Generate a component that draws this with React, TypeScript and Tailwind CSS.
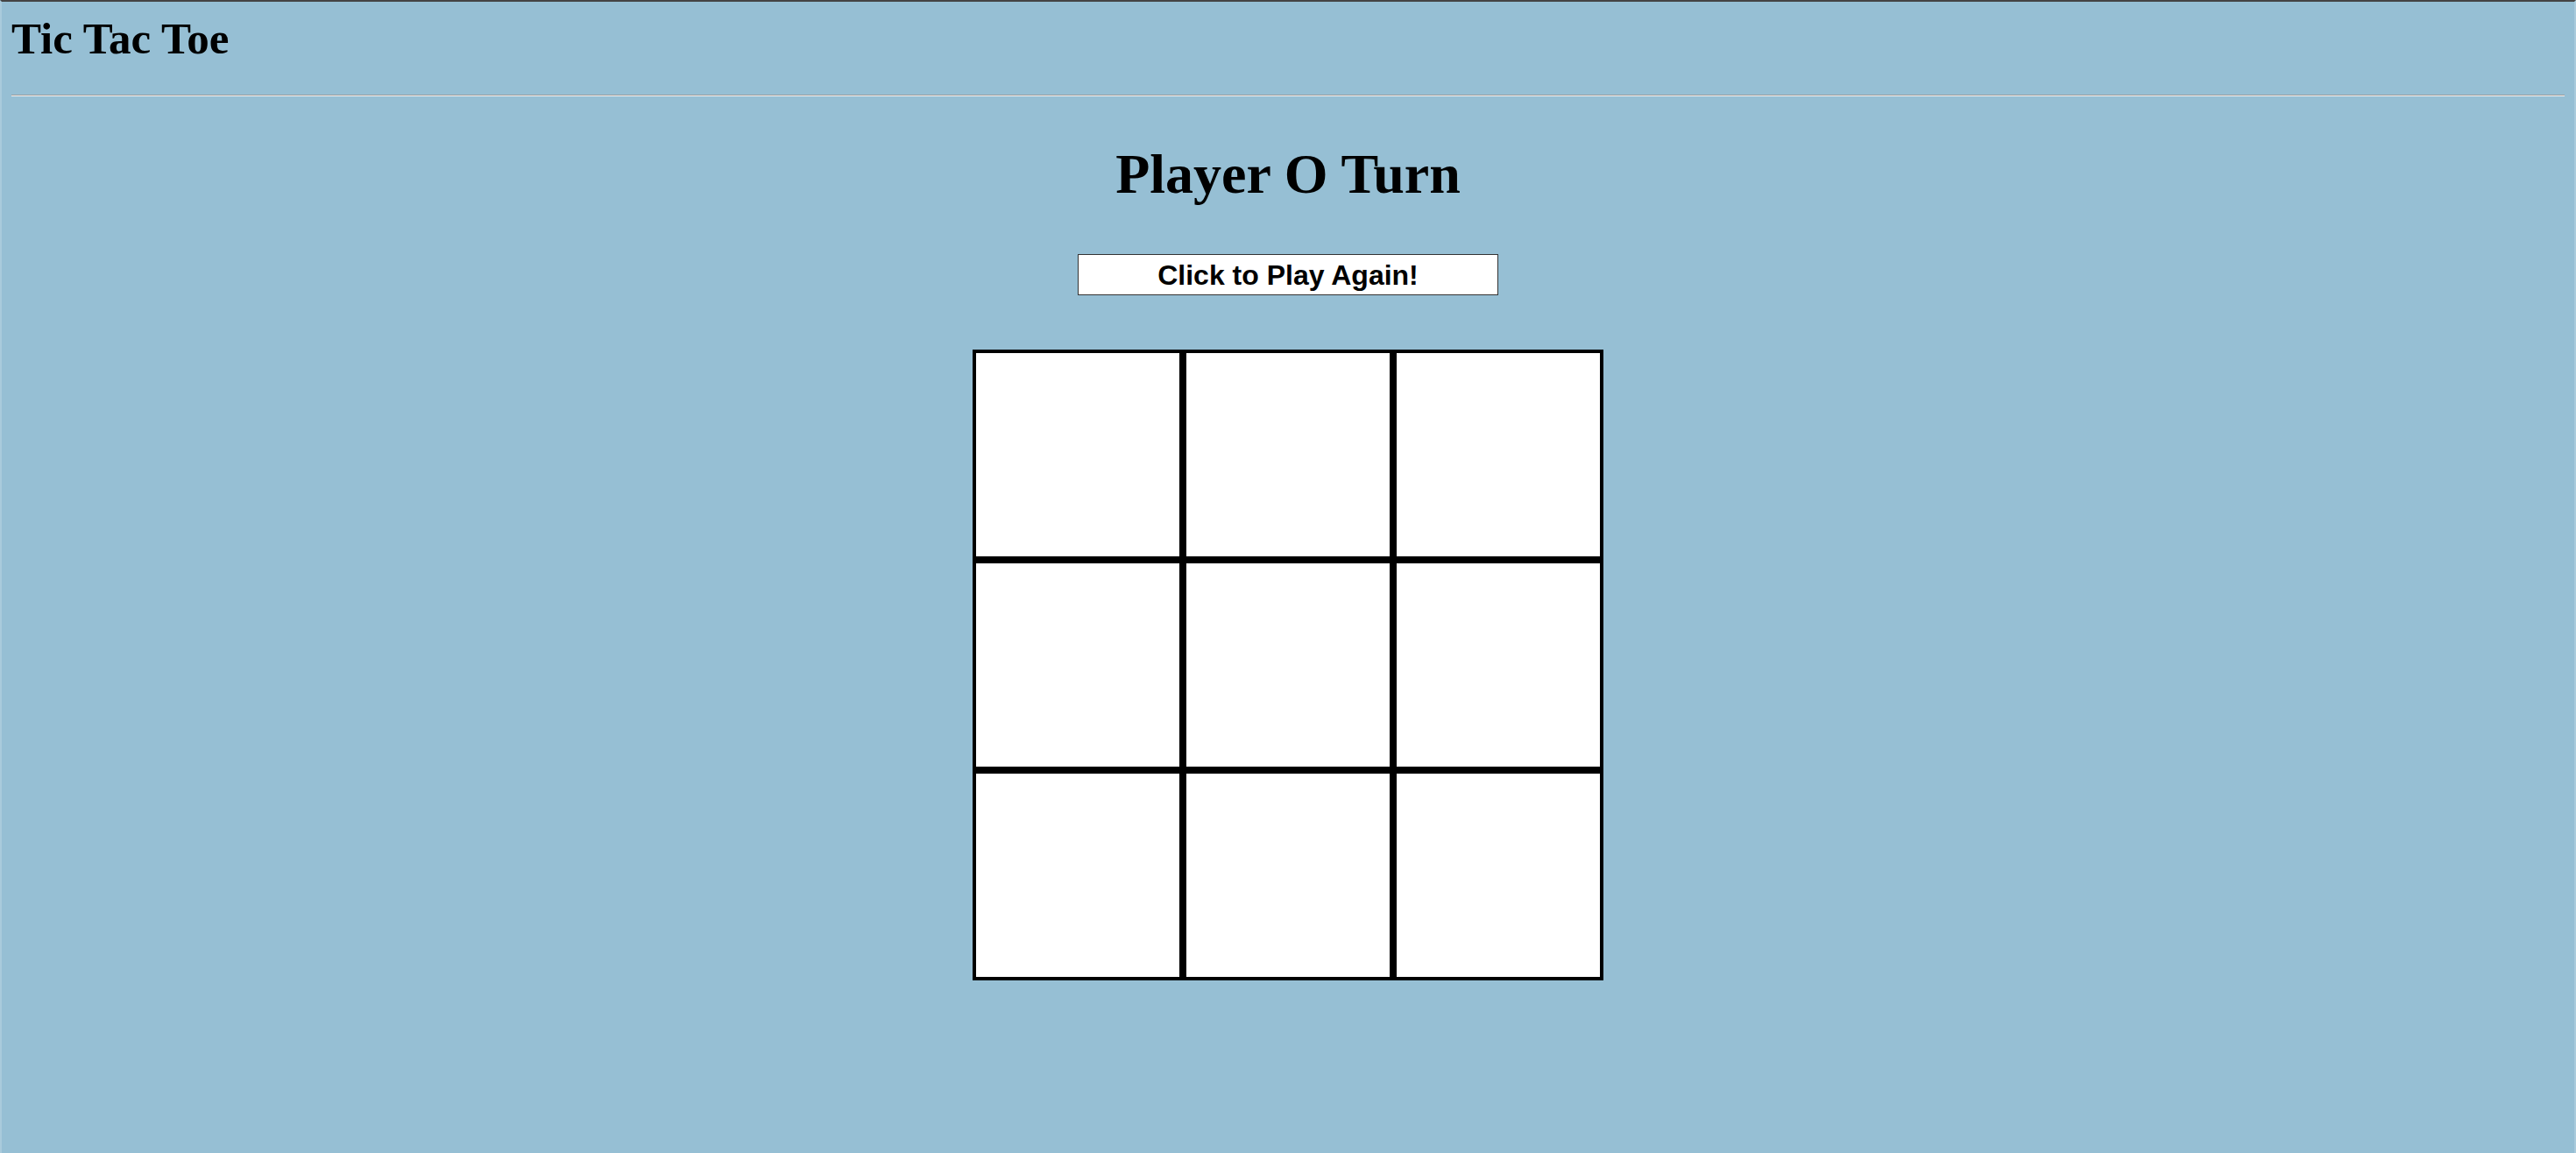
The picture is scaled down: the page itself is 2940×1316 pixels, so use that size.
import React from "react";

export default function App() {
  const cells = Array.from({ length: 9 });
  return (
    <div className="min-h-[1316px] w-full bg-[#96bfd4] border-t-2 border-t-[#444] border-l-2 border-l-[#a9cbdc] border-r-2 border-r-[#a9cbdc] flex flex-col">
      <div className="px-[11px]">
        <h1
          className="text-[51px] leading-none font-bold text-black pt-[17px] h-[106px]"
          style={{ fontFamily: '"Liberation Serif", "Times New Roman", serif' }}
        >
          Tic Tac Toe
        </h1>
        <div className="h-[2px] border-t border-t-[#9c9c9c] border-b border-b-[#f2f2f2]" />
      </div>
      <div className="flex flex-col items-center">
        <h2
          className="mt-[57px] text-[64px] leading-none font-bold text-black"
          style={{ fontFamily: '"Liberation Serif", "Times New Roman", serif' }}
        >
          Player O Turn
        </h2>
        <button
          className="mt-[59px] w-[480px] h-[47px] bg-white border border-[#333] text-[32px] font-bold text-black leading-none"
          style={{ fontFamily: '"Liberation Sans", Arial, sans-serif' }}
        >
          Click to Play Again!
        </button>
        <div className="mt-[62px] grid grid-cols-3 w-[720px]">
          {cells.map((_, i) => (
            <div key={i} className="w-[240px] h-[240px] bg-white border-4 border-black" />
          ))}
        </div>
      </div>
    </div>
  );
}
